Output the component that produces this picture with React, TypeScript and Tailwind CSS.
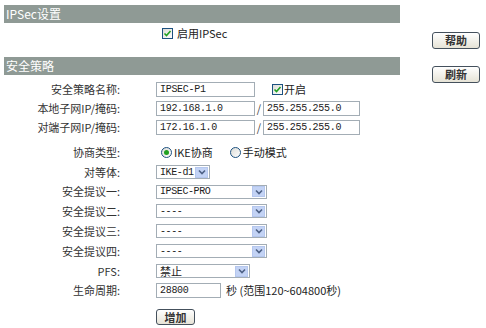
import type { ReactNode } from 'react';

const cjk = { fontFamily: '"Noto Sans CJK SC", "Liberation Sans", sans-serif' };
const mono = { fontFamily: '"Liberation Mono", "Noto Sans CJK SC", monospace' };

function Check() {
  return (
    <span className="inline-flex w-[11px] h-[11px] border border-[#1c5180] bg-gradient-to-br from-[#dcdcd7] to-white items-center justify-center">
      <svg width="9" height="9" viewBox="0 0 9 9">
        <path d="M1.5 4.5 L3.5 6.5 L7.5 2" fill="none" stroke="#21a121" strokeWidth="1.6" />
      </svg>
    </span>
  );
}

function Radio({ on }: { on?: boolean }) {
  return (
    <span className="inline-flex w-[11px] h-[11px] rounded-full border border-[#1c5180] bg-gradient-to-br from-[#dcdcd7] to-white items-center justify-center">
      {on && <span className="w-[5px] h-[5px] rounded-full bg-[#21a121]" />}
    </span>
  );
}

function Input({ value, w }: { value: string; w: string }) {
  return (
    <div className={`${w} h-[15px] border border-[#a3adb5] bg-white flex items-center pl-[3px] text-[10px] tracking-[-0.3px] text-[#222] whitespace-nowrap`} style={mono}>
      {value}
    </div>
  );
}

function Select({ value, w, cn }: { value: string; w: string; cn?: boolean }) {
  return (
    <div className={`${w} h-[14px] border border-[#a3adb5] bg-white flex items-center justify-between pl-[3px] pr-[1px] text-[10px] text-[#222] whitespace-nowrap overflow-hidden`} style={cn ? cjk : mono}>
      <span className={cn ? 'text-[11px]' : 'tracking-[-0.4px]'}>{value}</span>
      <span className="shrink-0 w-[13px] h-[11px] bg-[#c3d3f5] border border-[#b5c7ee] flex items-center justify-center">
        <svg width="8" height="6" viewBox="0 0 8 6">
          <path d="M1 1.5 L4 4.5 L7 1.5" fill="none" stroke="#4d6185" strokeWidth="1.6" />
        </svg>
      </span>
    </div>
  );
}

function Row({ label, h, pt, children }: { label: string; h: string; pt?: string; children?: ReactNode }) {
  return (
    <div className={`flex ${h} ${pt ?? ''}`}>
      <div className="flex items-center w-full">
        <div className="w-[120px] text-right text-[11px] text-[#333]">{label}</div>
        <div className="ml-[36px] flex items-center">{children}</div>
      </div>
    </div>
  );
}

function Btn({ label, w, h }: { label: string; w: string; h: string }) {
  return (
    <div className={`${w} ${h} border border-[#44505c] rounded-[3px] bg-gradient-to-b from-white to-[#e6e3d6] flex items-center justify-center text-[11px] font-bold text-[#333]`}>
      {label}
    </div>
  );
}

export default function App() {
  return (
    <div className="w-[486px] h-[328px] bg-white flex overflow-hidden" style={cjk}>
      <div className="w-[400px] flex flex-col pt-[5px]">
        <div className="ml-[4px] w-[396px] h-[18px] bg-[#8f9a95] text-white text-[12px] flex items-center pl-[2px]">
          IPSec设置
        </div>
        <div className="h-[20px] flex items-center pl-[162px] gap-[4px] text-[11px] text-[#222]">
          <Check />
          <span>启用IPSec</span>
        </div>
        <div className="mt-[14px] ml-[4px] w-[396px] h-[18px] bg-[#8f9a95] text-white text-[12px] flex items-center pl-[2px]">
          安全策略
        </div>
        <div className="mt-[4px] flex flex-col">
          <Row label="安全策略名称:" h="h-[20px]">
            <Input value="IPSEC-P1" w="w-[99px]" />
            <span className="ml-[17px] flex items-center gap-[1px] text-[11px] text-[#222]">
              <Check />
              开启
            </span>
          </Row>
          <Row label="本地子网IP/掩码:" h="h-[18px]">
            <Input value="192.168.1.0" w="w-[99px]" />
            <span className="w-[8px] text-center text-[11px] text-[#444]">/</span>
            <Input value="255.255.255.0" w="w-[97px]" />
          </Row>
          <Row label="对端子网IP/掩码:" h="h-[20px]">
            <Input value="172.16.1.0" w="w-[99px]" />
            <span className="w-[8px] text-center text-[11px] text-[#444]">/</span>
            <Input value="255.255.255.0" w="w-[97px]" />
          </Row>
          <Row label="协商类型:" h="h-[25px]" pt="pt-[5px]">
            <span className="ml-[5px] flex items-center gap-[2px] text-[11px] text-[#222]">
              <Radio on />
              IKE协商
            </span>
            <span className="ml-[17px] flex items-center gap-[2px] text-[11px] text-[#222]">
              <Radio />
              手动模式
            </span>
          </Row>
          <Row label="对等体:" h="h-[20px]">
            <Select value="IKE-d1" w="w-[54px]" />
          </Row>
          <Row label="安全提议一:" h="h-[19px]">
            <Select value="IPSEC-PRO" w="w-[111px]" />
          </Row>
          <Row label="安全提议二:" h="h-[20px]">
            <Select value="----" w="w-[111px]" />
          </Row>
          <Row label="安全提议三:" h="h-[20px]">
            <Select value="----" w="w-[111px]" />
          </Row>
          <Row label="安全提议四:" h="h-[20px]">
            <Select value="----" w="w-[111px]" />
          </Row>
          <Row label="PFS:" h="h-[20px]">
            <Select value="禁止" w="w-[94px]" cn />
          </Row>
          <Row label="生命周期:" h="h-[19px]">
            <Input value="28800" w="w-[65px]" />
            <span className="ml-[5px] text-[11px] text-[#222]">秒 (范围120~604800秒)</span>
          </Row>
          <div className="pl-[156px] pt-[9px]">
            <Btn label="增加" w="w-[39px]" h="h-[16px]" />
          </div>
        </div>
      </div>
      <div className="flex-1 flex flex-col pl-[32px] pt-[32px] gap-[17px]">
        <Btn label="帮助" w="w-[48px]" h="h-[17px]" />
        <Btn label="刷新" w="w-[48px]" h="h-[17px]" />
      </div>
    </div>
  );
}
